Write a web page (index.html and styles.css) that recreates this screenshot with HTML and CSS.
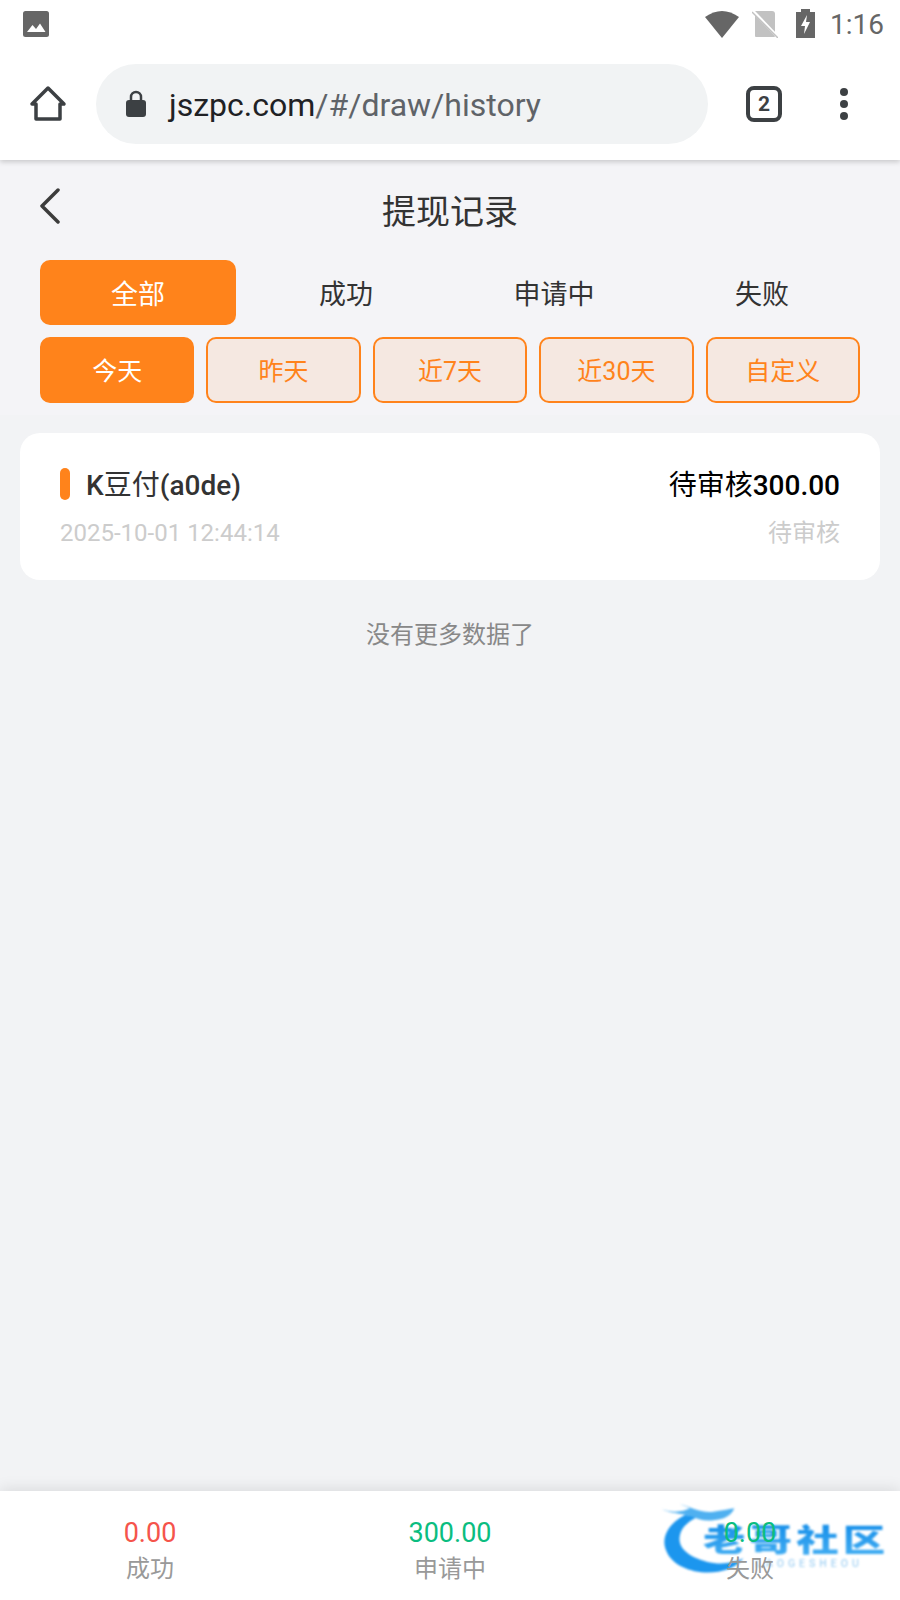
FILE: index.html
```html
<!DOCTYPE html>
<html lang="zh-CN">
<head>
  <meta charset="UTF-8" />
  <title>提现记录</title>
  <link rel="stylesheet" href="styles.css">
</head>
<body>

  <!-- 系统状态栏 -->
  <div class="status-bar">
    <svg class="icon-picture" width="26" height="26" viewBox="0 0 26 26">
      <rect width="26" height="26" rx="2.5" fill="#666"/>
      <path d="M4 21 L9.5 14 L13 18 L17 12.5 L22.500 21 Z" fill="#fff"/>
    </svg>
    <div class="status-right">
      <svg width="34" height="28" viewBox="0 0 34 28">
        <path d="M0 7 Q17 -5 34 7 L17 28 Z" fill="#666"/>
      </svg>
      <svg class="icon-sim" width="26" height="28" viewBox="0 0 26 28">
        <path d="M3 1 H20 Q23 1 23 4 V26 Q23 27 22 27 H4 Q3 27 3 26 Z" fill="#c2c2c2"/>
        <path d="M0 0 L25 26" stroke="#fff" stroke-width="3"/>
        <path d="M0 2 L26 28" stroke="#c2c2c2" stroke-width="1.500"/>
      </svg>
      <svg class="icon-battery" width="19" height="29" viewBox="0 0 19 29">
        <path d="M5 0 H14 V3 H19 V29 H0 V3 H5 Z" fill="#666"/>
        <path d="M11 6 L5 17 H9 L8 25 L14 13 H10 Z" fill="#fff"/>
      </svg>
      <span class="status-time">1:16</span>
    </div>
  </div>

  <!-- 浏览器工具栏 -->
  <div class="toolbar">
    <svg class="icon-home" width="38" height="38" viewBox="0 0 38 38">
      <path d="M3 19 L19 3 L35 19 H31 V34 H7 V19 Z" fill="none" stroke="#3c4043" stroke-width="3.500" stroke-linejoin="round"/>
    </svg>
    <div class="url-pill">
      <svg width="20" height="28" viewBox="0 0 20 28">
        <path d="M5 11 V7 a5 5 0 0 1 10 0 V11" fill="none" stroke="#3c4043" stroke-width="2.500"/>
        <rect y="10" width="20" height="17" rx="3" fill="#3c4043"/>
      </svg>
      <div class="url-text"><span class="url-host">jszpc.com</span>/#/draw/history</div>
    </div>
    <div class="tab-count">2</div>
    <div class="menu-dots"><i></i><i></i><i></i></div>
  </div>

  <div class="page">
    <div class="page-top">
      <div class="page-head">
        <svg class="icon-back" width="22" height="36" viewBox="0 0 22 36">
          <path d="M19 2 L3 18 L19 34" fill="none" stroke="#3c3c3c" stroke-width="3.500" stroke-linecap="round" stroke-linejoin="round"/>
        </svg>
        <h2>提现记录</h2>
      </div>

      <div class="status-tabs">
        <div class="status-tab active">全部</div>
        <div class="status-tab">成功</div>
        <div class="status-tab">申请中</div>
        <div class="status-tab">失败</div>
      </div>

      <div class="date-tabs">
        <div class="date-tab active">今天</div>
        <div class="date-tab">昨天</div>
        <div class="date-tab">近7天</div>
        <div class="date-tab">近30天</div>
        <div class="date-tab">自定义</div>
      </div>
    </div>

    <div class="record-card">
      <div class="record-row">
        <div class="record-name"><i class="record-mark"></i><span>K<span class="cjk">豆付</span>(a0de)</span></div>
        <div class="record-amount"><span class="cjk">待审核</span>300.00</div>
      </div>
      <div class="record-row record-sub">
        <span class="record-time">2025-10-01 12:44:14</span>
        <span class="record-state">待审核</span>
      </div>
    </div>

    <div class="no-more">没有更多数据了</div>
  </div>

  <div class="summary-bar">
    <div class="summary-item">
      <div class="summary-num red">0.00</div>
      <div class="summary-label">成功</div>
    </div>
    <div class="summary-item">
      <div class="summary-num green">300.00</div>
      <div class="summary-label">申请中</div>
    </div>
    <div class="summary-item">
      <div class="summary-num green">0.00</div>
      <div class="summary-label">失败</div>
    </div>

    <!-- 水印 -->
    <div class="watermark">
      <svg class="watermark-dragon" width="260" height="120" viewBox="0 0 780 360">
        <path d="M135 105 C85 130 60 175 80 215 C100 262 170 285 235 275 C270 270 295 255 310 235 C280 250 240 255 200 245 C150 232 110 205 120 165 C125 140 150 120 175 110 Z" fill="#1c96ee"/>
        <path d="M65 88 C100 100 130 95 150 85 C135 78 125 75 120 72 C160 85 190 100 220 95 C245 92 265 88 283 85 C275 105 255 118 225 120 C195 125 175 118 150 108 C120 100 90 100 65 88 Z" fill="#4fb0f0"/>
      </svg>
      <div class="watermark-name">老哥社区</div>
      <div class="watermark-sub">LAOGESHEOU</div>
    </div>
  </div>

</body>
</html>
```

FILE: styles.css
```css
* {
  box-sizing: border-box;
}

body {
  margin: 0;
  width: 900px;
  height: 1600px;
  display: flex;
  flex-direction: column;
  overflow: hidden;
  background-color: #f2f3f5;
  font-family: Roboto, "Noto Sans CJK SC", sans-serif;
}

/* 状态栏 */
.status-bar {
  height: 50px;
  padding: 10px 16px 0 23px;
  display: flex;
  justify-content: space-between;
  align-items: flex-start;
  background-color: #fff;
  position: relative;
  z-index: 1;
}

.icon-picture {
  margin-top: 1px;
}

.status-right {
  display: flex;
  align-items: flex-start;
  gap: 15px;
}

.icon-sim {
  margin-left: -2px;
  margin-right: 3px;
}

.icon-battery {
  margin-left: 0;
  margin-top: -1px;
}

.status-time {
  font-size: 28px;
  line-height: 30px;
  color: #666;
}

/* 工具栏 */
.toolbar {
  height: 110px;
  padding: 14px 0 16px 0;
  display: flex;
  align-items: center;
  background-color: #fff;
  box-shadow: 0 2px 5px rgba(0,0,0,0.18);
  position: relative;
}

.icon-home {
  margin-left: 29px;
  margin-right: 29px;
}

.url-pill {
  width: 612px;
  height: 80px;
  padding-left: 30px;
  border-radius: 40px;
  display: flex;
  align-items: center;
  gap: 23px;
  background-color: #f1f3f4;
}

.url-text {
  padding-top: 2px;
  font-size: 32px;
  color: #5f6368;
}

.url-host {
  color: #202124;
}

.tab-count {
  width: 36px;
  height: 36px;
  margin-left: 38px;
  border: 4px solid #3c4043;
  border-radius: 8px;
  display: flex;
  align-items: center;
  justify-content: center;
  font-size: 21px;
  font-weight: 700;
  color: #3c4043;
}

.menu-dots {
  margin-left: 58px;
  display: flex;
  flex-direction: column;
  gap: 4px;
}

.menu-dots i {
  width: 8px;
  height: 8px;
  border-radius: 50%;
  background-color: #3c4043;
}

/* 内容 */
.page {
  flex: 1;
}

.page-top {
  padding-bottom: 12px;
  background-color: #f4f4f7;
}

.page-head {
  height: 100px;
  position: relative;
  text-align: center;
}

.icon-back {
  position: absolute;
  left: 39px;
  top: 28px;
}

h2 {
  margin: 0;
  padding-top: 30px;
  font-size: 34px;
  line-height: 44px;
  font-weight: 400;
  color: #333;
}

.status-tabs {
  padding: 0 40px;
  display: grid;
  grid-template-columns: repeat(4, 1fr);
  gap: 12px;
}

.status-tab {
  height: 65px;
  border-radius: 10px;
  display: flex;
  align-items: center;
  justify-content: center;
  font-size: 27px;
  color: #333;
}

.status-tab.active {
  background-color: #ff831b;
  color: #fff;
}

.date-tabs {
  margin-top: 12px;
  padding: 0 40px;
  display: grid;
  grid-template-columns: repeat(5, 1fr);
  gap: 12px;
}

.date-tab {
  height: 66px;
  padding-bottom: 2px;
  border: 2px solid #ff831b;
  border-radius: 10px;
  display: flex;
  align-items: center;
  justify-content: center;
  font-size: 25px;
  color: #ff831b;
  background-color: #f5e8e1;
}

.date-tab.active {
  background-color: #ff831b;
  color: #fff;
}

.record-card {
  margin: 18px 20px 0;
  height: 147px;
  padding: 33px 40px 0;
  border-radius: 20px;
  background-color: #fff;
}

.record-row {
  display: flex;
  justify-content: space-between;
  align-items: center;
}

.record-name {
  display: flex;
  align-items: center;
  gap: 16px;
  font-size: 28px;
  line-height: 40px;
  font-weight: 500;
  color: #333;
}

.record-mark {
  width: 10px;
  height: 32px;
  margin-bottom: 4px;
  border-radius: 5px;
  background-color: #ff831b;
}

.record-amount {
  font-size: 28px;
  line-height: 40px;
  font-weight: 500;
  color: #000;
}

.cjk {
  font-weight: 400;
}

.record-sub {
  margin-top: 9px;
  line-height: 36px;
  color: #ccc;
}

.record-time {
  font-size: 24px;
}

.record-state {
  font-size: 24px;
}

.no-more {
  margin-top: 35px;
  text-align: center;
  font-size: 24px;
  line-height: 40px;
  color: #888;
}

/* 底部统计 */
.summary-bar {
  height: 109px;
  padding-top: 23px;
  display: grid;
  grid-template-columns: repeat(3, 1fr);
  background-color: #fff;
  box-shadow: 0 -2px 14px rgba(0,0,0,0.1);
  position: relative;
  text-align: center;
}

.summary-item {
  position: relative;
  z-index: 1;
}

.summary-num {
  font-size: 27px;
  line-height: 38px;
}

.summary-num.red {
  color: #f5544b;
}

.summary-num.green {
  color: #0bbd80;
}

.summary-label {
  font-size: 24px;
  line-height: 34px;
  color: #999;
}

.watermark {
  position: absolute;
  left: 640px;
  top: -11px;
  width: 260px;
  height: 120px;
  filter: blur(1px);
  text-align: left;
}

.watermark-dragon {
  display: block;
}

.watermark-name {
  position: absolute;
  left: 63px;
  top: 39px;
  font-size: 31px;
  line-height: 44px;
  font-weight: 900;
  letter-spacing: 3px;
  white-space: nowrap;
  color: transparent;
  background: linear-gradient(#0f8ae8, #4cb4f4);
  -webkit-background-clip: text;
  background-clip: text;
  transform: scaleX(1.37);
  transform-origin: left center;
}

.watermark-sub {
  position: absolute;
  left: 116px;
  top: 77px;
  font-size: 10.500px;
  line-height: 14px;
  font-weight: 500;
  letter-spacing: 4px;
  white-space: nowrap;
  color: #a8d4f4;
}
```
